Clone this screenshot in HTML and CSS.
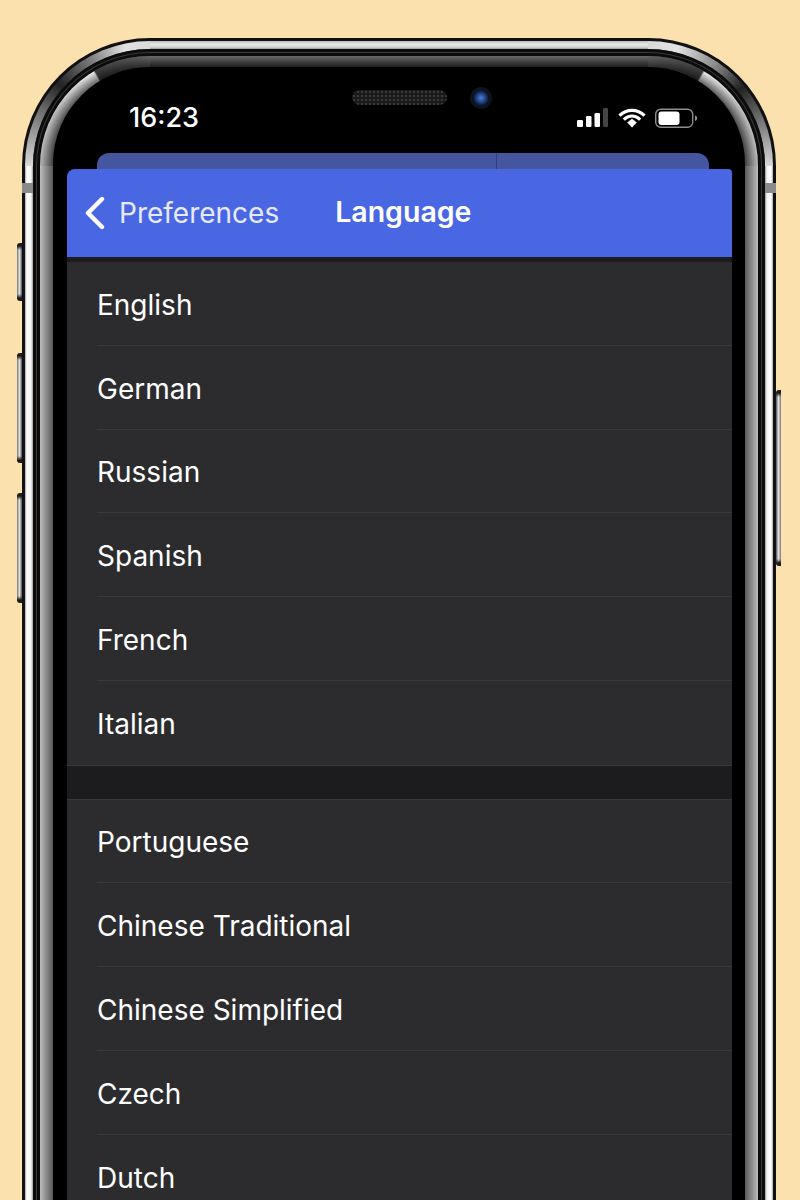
FILE: index.html
```html
<!DOCTYPE html>
<html lang="en">
<head>
    <meta charset="UTF-8">
    <meta name="viewport" content="width=device-width, initial-scale=1.0">
    <title>Language</title>
    <link rel="stylesheet" href="styles.css">
</head>
<body>
    <div class="phone">
        <span class="side-btn btn-mute"></span>
        <span class="side-btn btn-vol-up"></span>
        <span class="side-btn btn-vol-down"></span>
        <span class="side-btn btn-power"></span>
        <span class="band band-left"></span>
        <span class="band band-right"></span>
        <div class="metal">
            <div class="groove">
                <div class="bezel">
                    <div class="screen">
                        <div class="sensors">
                            <div class="speaker"></div>
                            <div class="camera"></div>
                        </div>
                        <div class="status-bar">
                            <span class="time">16:23</span>
                            <svg class="status-icons" width="122" height="22" viewBox="0 0 122 22">
                                <rect x="0" y="13" width="6" height="7" rx="1.2" fill="#fff"/>
                                <rect x="9" y="9" width="5.5" height="11" rx="1.2" fill="#fff"/>
                                <rect x="17.5" y="6" width="5.5" height="14" rx="1.2" fill="#fff"/>
                                <rect x="26" y="1" width="5" height="19" rx="1.2" fill="#444"/>
                                <path d="M42.5 8.6 C49.5 1.6 60.5 1.6 67.5 8.6" fill="none" stroke="#fff" stroke-width="3.2"/>
                                <path d="M46.8 12.6 C51.8 8 58.2 8 63.2 12.6" fill="none" stroke="#fff" stroke-width="3.2"/>
                                <path d="M50.2 15.6 L55 11.8 L59.8 15.6 L55 20.4 Z" fill="#fff"/>
                                <rect x="78.7" y="2.2" width="37" height="18" rx="5" fill="none" stroke="#8e8e8e" stroke-width="1.4"/>
                                <rect x="81.5" y="4.5" width="21" height="13.5" rx="3" fill="#fff"/>
                                <path d="M118 8.5 C119.6 9 120.2 10 120.2 11.2 C120.2 12.4 119.6 13.4 118 13.9 Z" fill="#8e8e8e"/>
                            </svg>
                        </div>
                        <div class="back-card"><span class="back-divider"></span></div>
                        <div class="card">
                            <div class="nav-bar">
                                <svg class="chevron" width="22" height="34" viewBox="0 0 22 34">
                                    <path d="M18 3 L4 17 L18 31" fill="none" stroke="#fff" stroke-width="4.4" stroke-linecap="round" stroke-linejoin="round"/>
                                </svg>
                                <span class="nav-back">Preferences</span>
                                <span class="nav-title">Language</span>
                            </div>
                            <div class="list">
                                <div class="row"><span>English</span></div>
                                <div class="row"><span>German</span></div>
                                <div class="row"><span>Russian</span></div>
                                <div class="row"><span>Spanish</span></div>
                                <div class="row"><span>French</span></div>
                                <div class="row"><span>Italian</span></div>
                            </div>
                            <div class="list-gap"></div>
                            <div class="list">
                                <div class="row"><span>Portuguese</span></div>
                                <div class="row"><span>Chinese Traditional</span></div>
                                <div class="row"><span>Chinese Simplified</span></div>
                                <div class="row"><span>Czech</span></div>
                                <div class="row"><span>Dutch</span></div>
                            </div>
                        </div>
                    </div>
                </div>
            </div>
        </div>
    </div>
</body>
</html>
```

FILE: styles.css
```css
html, body { margin: 0; height: 1200px; overflow: hidden; }
body { background-color: #fae1ad; font-family: Inter, "Noto Sans", sans-serif; color: #fff; }

/* device frame, layers from the outside in */
.phone {
    position: relative;
    box-sizing: border-box;
    width: 754px;
    height: 1400px;
    margin: 38px 0 0 22px;
    padding: 3px;
    border-radius: 128px;
    background-color: #111;
}
.metal {
    box-sizing: border-box;
    height: 100%;
    padding: 8px;
    border-radius: 125px;
    background:
        conic-gradient(from 270deg at 100% 100%, #d8d8d8 0deg, #6a6a6a 28deg, #222 42deg, #777 60deg, #e2e2e2 78deg, #d8d8d8 90deg) 0 0 / 125px 125px no-repeat,
        conic-gradient(from 0deg at 0 100%, #d8d8d8 0deg, #e2e2e2 14deg, #888 34deg, #222 50deg, #6a6a6a 66deg, #d8d8d8 90deg) 100% 0 / 125px 125px no-repeat,
        linear-gradient(180deg, #bbb, #e8e8e8 3px, #d8d8d8 6px, #999 8px) 50% 0 / calc(100% - 250px) 8px no-repeat,
        linear-gradient(90deg, #aaa, #fff 2px, #f4f4f4 6px, #999 8px) 0 125px / 8px 100% no-repeat,
        linear-gradient(270deg, #aaa, #fff 2px, #f4f4f4 6px, #999 8px) 100% 125px / 8px 100% no-repeat;
}
.groove {
    box-sizing: border-box;
    height: 100%;
    padding: 7px 7px 0;
    border-radius: 117px;
    background-color: #3a3a3a;
    box-shadow: inset 0 0 0 3px #0c0c0c;
}
.bezel {
    box-sizing: border-box;
    height: 100%;
    padding: 11px 13px 0;
    border-radius: 110px;
    box-shadow: 0 0 0 3px #0c0c0c;
    background:
        radial-gradient(circle at 100% 100%, rgba(0,0,0,.65) 97px, rgba(0,0,0,0) 110px) 0 0 / 110px 110px no-repeat,
        radial-gradient(circle at 0 100%, rgba(0,0,0,.65) 97px, rgba(0,0,0,0) 110px) 100% 0 / 110px 110px no-repeat,
        conic-gradient(from 270deg at 100% 100%, #b8b8b8 0deg, #c8c8c8 30deg, #f0f0f0 59deg, #3c3c3c 60deg, #666 90deg) 0 0 / 110px 110px no-repeat,
        conic-gradient(from 0deg at 0 100%, #666 0deg, #3c3c3c 30deg, #f0f0f0 31deg, #c8c8c8 60deg, #b8b8b8 90deg) 100% 0 / 110px 110px no-repeat,
        linear-gradient(180deg, #6a6a6a, #1c1c1c) 50% 0 / calc(100% - 220px) 11px no-repeat,
        linear-gradient(90deg, #bcbcbc, #5a5a5a) 0 110px / 13px 100% no-repeat,
        linear-gradient(270deg, #bcbcbc, #5a5a5a) 100% 110px / 13px 100% no-repeat;
}
.screen {
    height: 100%;
    border-radius: 97px;
    background-color: #000;
    overflow: hidden;
}

.side-btn {
    position: absolute;
    left: -5px;
    width: 5px;
    border-radius: 3px 0 0 3px;
    background:
        linear-gradient(180deg, #1c1c1c 3px, rgba(0,0,0,0) 7px, rgba(0,0,0,0) calc(100% - 7px), #1c1c1c calc(100% - 3px)),
        linear-gradient(90deg, #777, #e0e0e0 50%, #555);
}
.btn-mute { top: 205px; height: 58px; }
.btn-vol-up { top: 315px; height: 110px; }
.btn-vol-down { top: 455px; height: 110px; }
.btn-power { left: auto; right: -5px; top: 352px; height: 176px; border-radius: 0 3px 3px 0; transform: scaleX(-1); }

.band { position: absolute; top: 145px; width: 11px; height: 10px; background-color: #8a8a8a; }
.band-left { left: 0; }
.band-right { right: 0; }

/* top of the screen */
.sensors {
    display: flex;
    align-items: center;
    height: 15px;
    padding: 23px 0 0 299px;
}
.speaker {
    width: 95px;
    height: 15px;
    border-radius: 8px;
    background-color: #1a1a1a;
    background-image: radial-gradient(#3a3a3a 1px, transparent 1.2px);
    background-size: 4px 4px;
}
.camera {
    width: 22px;
    height: 22px;
    margin-left: 23px;
    border-radius: 50%;
    background: radial-gradient(circle, #4d7fd8 0, #264a96 25%, #0b1424 50%, #10100e 90%);
}
.status-bar {
    display: flex;
    align-items: center;
    justify-content: space-between;
    height: 32px;
    padding: 0 46px 0 76px;
    margin-top: -3px;
}
.time { font-size: 27px; font-weight: 500; line-height: 32px; }
.status-icons { display: block; }

.back-card {
    position: relative;
    width: 612px;
    height: 16px;
    margin: 19px 0 0 44px;
    border-radius: 12px 12px 0 0;
    background-color: #45559e;
}
.back-divider { position: absolute; left: 399px; top: 0; width: 1px; height: 16px; background-color: #2f3f80; }

.card {
    width: 665px;
    margin-left: 14px;
    border-radius: 8px 4px 0 0;
    background-color: #1c1c1e;
    overflow: hidden;
}
.nav-bar {
    display: flex;
    align-items: center;
    height: 88px;
    margin-bottom: 5px;
    background-color: #4a67e3;
}
.chevron { margin-left: 17px; }
.nav-back { margin-left: 13px; font-size: 28px; color: #e6eafb; }
.nav-title { margin-left: 56px; padding-bottom: 3px; font-size: 28.5px; font-weight: 600; }

.list { background-color: #2c2c2e; }
.list-gap {
    box-sizing: border-box;
    height: 35px;
    border-top: 1px solid #39393b;
    border-bottom: 1px solid #39393b;
}
.row {
    box-sizing: border-box;
    display: flex;
    align-items: center;
    height: 83.75px;
    margin-left: 30px;
    padding-top: 3px;
    border-bottom: 1px solid #39393b;
    font-size: 28px;
}
.row:last-child { border-bottom: none; }
```
